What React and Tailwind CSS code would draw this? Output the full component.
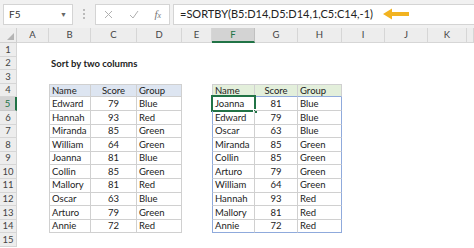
const left = [
  ["Edward", 79, "Blue"],
  ["Hannah", 93, "Red"],
  ["Miranda", 85, "Green"],
  ["William", 64, "Green"],
  ["Joanna", 81, "Blue"],
  ["Collin", 85, "Green"],
  ["Mallory", 81, "Red"],
  ["Oscar", 63, "Blue"],
  ["Arturo", 79, "Green"],
  ["Annie", 72, "Red"],
];

const right = [
  ["Joanna", 81, "Blue"],
  ["Edward", 79, "Blue"],
  ["Oscar", 63, "Blue"],
  ["Miranda", 85, "Green"],
  ["Collin", 85, "Green"],
  ["Arturo", 79, "Green"],
  ["William", 64, "Green"],
  ["Hannah", 93, "Red"],
  ["Mallory", 81, "Red"],
  ["Annie", 72, "Red"],
];

const letters = ["A", "B", "C", "D", "E", "F", "G", "H", "I", "J", "K", ""];

const FormulaBar = () => (
  <div className="flex h-[28px] items-center bg-[#f1f1f1] pl-[3px]">
    <div className="flex h-[21px] w-[70px] items-center justify-between border border-[#d4d4d4] bg-white pl-[5px] pr-[5px] text-[10px] text-[#333]">
      <span>F5</span>
      <span className="text-[7px] text-[#666]">▼</span>
    </div>
    <div className="flex w-[22px] flex-col items-center gap-[2px]">
      <span className="h-[2px] w-[2px] bg-[#bbb]" />
      <span className="h-[2px] w-[2px] bg-[#bbb]" />
      <span className="h-[2px] w-[2px] bg-[#bbb]" />
    </div>
    <div className="flex h-[21px] w-[75px] items-center justify-around border border-[#d4d4d4] bg-white text-[#a0a0a0]">
      <svg width="9" height="9" viewBox="0 0 9 9">
        <path d="M1 1L8 8M8 1L1 8" stroke="#b0b0b0" strokeWidth="1" />
      </svg>
      <svg width="10" height="9" viewBox="0 0 10 9">
        <path d="M1 5L4 8L9 1" stroke="#b0b0b0" strokeWidth="1" fill="none" />
      </svg>
      <span className="font-['Liberation_Serif',serif] text-[11px] italic text-[#777]">
        f<span className="text-[8px]">x</span>
      </span>
    </div>
    <div className="ml-[3px] flex h-[21px] flex-1 items-center border-y border-l border-[#d4d4d4] bg-white pl-[6px] text-[11px] text-[#222]">
      <span>=SORTBY(B5:D14,D5:D14,1,C5:C14,-1)</span>
      <svg className="ml-[10px]" width="27" height="12" viewBox="0 0 27 12">
        <path d="M0 6L9 0.5V4H26V8H9V11.5Z" fill="#f2b320" />
      </svg>
    </div>
  </div>
);

const cellClass = (r, c) => {
  // r: 1..15, c: 1..12 (A..L)
  const inLeft = r >= 4 && r <= 14 && c >= 2 && c <= 4;
  const inRight = r >= 4 && r <= 14 && c >= 6 && c <= 8;
  let cls = "relative flex items-center overflow-visible whitespace-nowrap px-[2px] text-[#222] ";
  if (c === 3 || c === 7) cls += "justify-center ";
  if (inLeft) {
    cls += "border-r border-b border-[#d0d0d0] ";
    if (c === 2) cls += "border-l ";
    if (r === 4) cls += "border-t bg-[#dde5f1] ";
  }
  if (inRight) {
    if (r === 4) {
      cls += "border-t border-r border-[#d0d0d0] bg-[#e3efdb] ";
      if (c === 6) cls += "border-l ";
      cls += "border-b border-b-[#8faadc] ";
    } else {
      cls += "border-b border-r border-[#d0d0d0] ";
      if (c === 6) cls += "border-l border-l-[#8faadc] ";
      if (c === 8) cls += "border-r-[#8faadc] ";
      if (r === 14) cls += "border-b-[#8faadc] ";
    }
  }
  return cls;
};

const cellText = (r, c) => {
  if (r === 2 && c === 2) return "Sort by two columns";
  if (r === 4 && (c === 2 || c === 6)) return "Name";
  if (r === 4 && (c === 3 || c === 7)) return "Score";
  if (r === 4 && (c === 4 || c === 8)) return "Group";
  if (r >= 5 && r <= 14) {
    if (c >= 2 && c <= 4) return left[r - 5][c - 2];
    if (c >= 6 && c <= 8) return right[r - 5][c - 6];
  }
  return "";
};

const Sheet = () => {
  const cells = [];
  // header row
  cells.push(
    <div key="corner" className="relative border-r border-b border-[#d0d0d0] bg-[#ededed]">
      <div className="absolute bottom-[2px] right-[2px] h-0 w-0 border-b-[7px] border-l-[7px] border-b-[#b4b4b4] border-l-transparent" />
    </div>
  );
  letters.forEach((l, i) =>
    cells.push(
      <div
        key={"h" + i}
        className={
          i === 5
            ? "flex items-center justify-center border-r border-b-2 border-r-[#c0c0c0] border-b-[#217346] bg-[#d3d3d3] text-[#217346]"
            : "flex items-center justify-center border-r border-b border-[#d6d6d6] bg-[#ededed] text-[#444]"
        }
      >
        {l}
      </div>
    )
  );
  for (let r = 1; r <= 15; r++) {
    cells.push(
      <div
        key={"r" + r}
        className={
          r === 5
            ? "flex items-center justify-center border-r-2 border-b border-r-[#217346] border-b-[#c8c8c8] bg-[#d3d3d3] text-[#217346]"
            : "flex items-center justify-center border-r border-b border-[#d6d6d6] bg-[#ededed] text-[#444]"
        }
      >
        {r}
      </div>
    );
    for (let c = 1; c <= 12; c++) {
      const t = cellText(r, c);
      cells.push(
        <div key={r + "-" + c} className={cellClass(r, c) + (r === 2 ? "font-bold" : "")}>
          {t}
          {r === 5 && c === 6 && (
            <div className="absolute inset-[-2px] border-2 border-[#217346]">
              <div className="absolute bottom-[-4px] right-[-4px] h-[5px] w-[5px] border border-white bg-[#217346]" />
            </div>
          )}
        </div>
      );
    }
  }
  return (
    <div className="grid grid-cols-[17px_32px_42px_46px_45px_30px_43px_43px_44px_43px_43px_39px_1fr] grid-rows-[15px_repeat(15,13.6px)] text-[9.5px] leading-none">
      {cells}
    </div>
  );
};

export default function App() {
  return (
    <div className="h-[248px] w-[474px] overflow-hidden bg-white font-['Lato',sans-serif]">
      <FormulaBar />
      <Sheet />
    </div>
  );
}
